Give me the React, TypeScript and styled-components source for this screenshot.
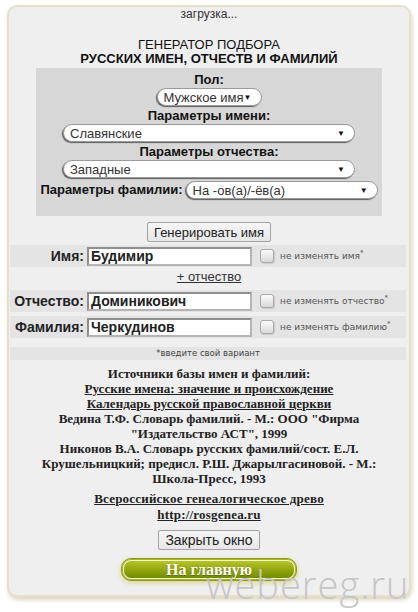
import styled, { createGlobalStyle } from "styled-components";

const GlobalStyle = createGlobalStyle`
  html, body {
    margin: 0;
    padding: 0;
    background: #fff;
  }
  body {
    font-family: "Liberation Sans", Arial, sans-serif;
    color: #222;
  }
`;

type Row = {
  label: string;
  value: string;
  lock: string;
};

const rows: Row[] = [
  { label: "Имя:", value: "Будимир", lock: "не изменять имя" },
  { label: "Отчество:", value: "Доминикович", lock: "не изменять отчество" },
  { label: "Фамилия:", value: "Черкудинов", lock: "не изменять фамилию" },
];

const Select = ({ value, width }: { value: string; width: number }) => (
  <StyledSelect $width={width}>
    <span>{value}</span>
    <Arrow>▼</Arrow>
  </StyledSelect>
);

const NameRow = ({ row }: { row: Row }) => (
  <RowBand>
    <RowLabel>{row.label}</RowLabel>
    <NameInput>{row.value}</NameInput>
    <Check />
    <LockText>
      {row.lock}
      <sup>*</sup>
    </LockText>
  </RowBand>
);

const App = () => {
  return (
    <Page>
      <GlobalStyle />
      <Panel>
        <Loading>загрузка...</Loading>
        <Title>
          ГЕНЕРАТОР ПОДБОРА
          <br />
          <b>РУССКИХ ИМЕН, ОТЧЕСТВ И ФАМИЛИЙ</b>
        </Title>
        <Params>
          <ParamLabel>Пол:</ParamLabel>
          <Select value="Мужское имя" width={105} />
          <ParamLabel>Параметры имени:</ParamLabel>
          <Select value="Славянские" width={292} />
          <ParamLabel>Параметры отчества:</ParamLabel>
          <Select value="Западные" width={292} />
          <InlineParam>
            <ParamLabel>Параметры фамилии:</ParamLabel>
            <Select value="На -ов(а)/-ёв(а)" width={192} />
          </InlineParam>
        </Params>
        <GrayButton $top={6}>Генерировать имя</GrayButton>
        <NameRow row={rows[0]} />
        <AddLink>+ отчество</AddLink>
        <NameRow row={rows[1]} />
        <NameRow row={rows[2]} />
        <Hint>*введите свой вариант</Hint>
        <Sources>
          Источники базы имен и фамилий:
          <br />
          <SourceLink>Русские имена: значение и происхождение</SourceLink>
          <br />
          <SourceLink>Календарь русской православной церкви</SourceLink>
          <br />
          Ведина Т.Ф. Словарь фамилий. - М.: ООО "Фирма
          <br />
          "Издательство АСТ", 1999
          <br />
          Никонов В.А. Словарь русских фамилий/сост. Е.Л.
          <br />
          Крушельницкий; предисл. Р.Ш. Джарылгасиновой. - М.:
          <br />
          Школа-Пресс, 1993
        </Sources>
        <Links>
          <SourceLink>Всероссийское генеалогическое древо</SourceLink>
          <br />
          <SourceLink>http://rosgenea.ru</SourceLink>
        </Links>
        <GrayButton $top={7} $size={14}>
          Закрыть окно
        </GrayButton>
        <HomeButton>На главную</HomeButton>
      </Panel>
      <Watermark>webereg.ru</Watermark>
    </Page>
  );
};

const Page = styled.div`
  position: relative;
  width: 418px;
  height: 612px;
  overflow: hidden;
  padding-top: 5px;
  box-sizing: border-box;
`;

const Panel = styled.div`
  margin-left: 7px;
  width: 400px;
  border: 2px solid #e4e1c8;
  border-radius: 10px;
  background: #efefef;
  box-shadow: 1px 3px 4px rgba(175, 165, 110, 0.45);
  padding-bottom: 14px;
  display: flex;
  flex-direction: column;
  align-items: center;
`;

const Loading = styled.div`
  font-size: 12px;
  line-height: 15px;
  color: #333;
`;

const Title = styled.div`
  margin-top: 16px;
  font-size: 13px;
  line-height: 14px;
  text-align: center;
  color: #111;
`;

const Params = styled.div`
  margin-top: 2px;
  width: 346px;
  box-sizing: border-box;
  padding: 4px 0 16px;
  background: #d7d7d7;
  display: flex;
  flex-direction: column;
  align-items: center;
`;

const ParamLabel = styled.div`
  font-size: 13px;
  font-weight: bold;
  line-height: 16px;
  color: #111;
`;

const InlineParam = styled.div`
  display: flex;
  align-items: center;
  gap: 3px;
  height: 20px;
`;

const StyledSelect = styled.div<{ $width: number }>`
  width: ${(p) => p.$width}px;
  height: 18px;
  box-sizing: border-box;
  margin-bottom: 2px;
  padding: 0 9px 0 6px;
  display: flex;
  align-items: center;
  justify-content: space-between;
  background: #fff;
  border: 1px solid #9a9a9a;
  border-radius: 9px;
  box-shadow: -1px 1px 1px #5c5c5c;
  font-size: 13px;
  color: #333;
  ${InlineParam} & {
    margin-bottom: 0;
  }
`;

const Arrow = styled.span`
  font-size: 8px;
  color: #111;
`;

const GrayButton = styled.div<{ $top: number; $size?: number }>`
  margin-top: ${(p) => p.$top}px;
  height: 20px;
  box-sizing: border-box;
  padding: 0 6px;
  display: flex;
  align-items: center;
  background: linear-gradient(#f6f6f6, #e6e6e6);
  border: 1px solid #a3a3a3;
  border-radius: 2px;
  font-size: ${(p) => p.$size ?? 13}px;
  color: #222;
`;

const RowBand = styled.div`
  margin-top: 3px;
  align-self: stretch;
  margin-left: 1px;
  margin-right: 3px;
  height: 22px;
  background: #e4e4e4;
  display: flex;
  align-items: center;
  & + & {
    margin-top: 4px;
  }
`;

const RowLabel = styled.div`
  width: 74px;
  text-align: right;
  font-size: 14px;
  font-weight: bold;
  color: #222;
`;

const NameInput = styled.div`
  margin-left: 3px;
  width: 165px;
  height: 19px;
  box-sizing: border-box;
  padding-left: 2px;
  background: #fff;
  border: 2px solid;
  border-color: #8f8f8f #b4b4b4 #b4b4b4 #8f8f8f;
  font-size: 14px;
  font-weight: bold;
  line-height: 15px;
  color: #222;
`;

const Check = styled.div`
  margin-left: 8px;
  width: 12px;
  height: 12px;
  border: 1px solid #a8a8a8;
  border-radius: 3px;
  background: linear-gradient(#fbfbfb, #d9d9d9);
  box-shadow: 1px 1px 1px rgba(0, 0, 0, 0.12);
`;

const LockText = styled.div`
  margin-left: 6px;
  font-family: "DejaVu Sans", Verdana, sans-serif;
  font-size: 9px;
  color: #555;
  sup {
    font-size: 7px;
    line-height: 0;
  }
`;

const AddLink = styled.div`
  height: 20px;
  line-height: 20px;
  font-size: 13px;
  color: #333;
  text-decoration: underline;
`;

const Hint = styled.div`
  margin-top: 9px;
  align-self: stretch;
  margin-left: 1px;
  margin-right: 3px;
  height: 13px;
  line-height: 13px;
  background: #e4e4e4;
  text-align: center;
  font-family: "DejaVu Sans", Verdana, sans-serif;
  font-size: 8.5px;
  color: #444;
`;

const Sources = styled.div`
  margin-top: 6px;
  font-family: "Liberation Serif", "Times New Roman", serif;
  font-size: 13px;
  font-weight: bold;
  line-height: 15px;
  text-align: center;
  color: #222;
  white-space: nowrap;
`;

const Links = styled(Sources)`
  margin-top: 5px;
  line-height: 16px;
  letter-spacing: 0.2px;
`;

const SourceLink = styled.span`
  text-decoration: underline;
`;

const HomeButton = styled.div`
  margin-top: 8px;
  width: 176px;
  height: 23px;
  box-sizing: border-box;
  border: 1px solid #8e9b12;
  border-radius: 10px;
  background: linear-gradient(#bccb2c, #8ea40a 55%, #6c8600);
  box-shadow: inset 0 0 0 1px #a9b81d, inset 0 0 0 2px #f4f7d8,
    0 2px 5px rgba(200, 190, 80, 0.55);
  display: flex;
  align-items: center;
  justify-content: center;
  font-family: "Liberation Serif", "Times New Roman", serif;
  font-size: 16px;
  font-weight: bold;
  color: #fff;
  text-shadow: 0 1px 1px rgba(60, 70, 0, 0.5);
`;

const Watermark = styled.div`
  position: absolute;
  left: 206px;
  top: 570px;
  font-family: "Open Sans", sans-serif;
  font-weight: 300;
  font-size: 38px;
  letter-spacing: 1px;
  line-height: 28px;
  color: #c6c6c6;
  pointer-events: none;
`;

export default App;
